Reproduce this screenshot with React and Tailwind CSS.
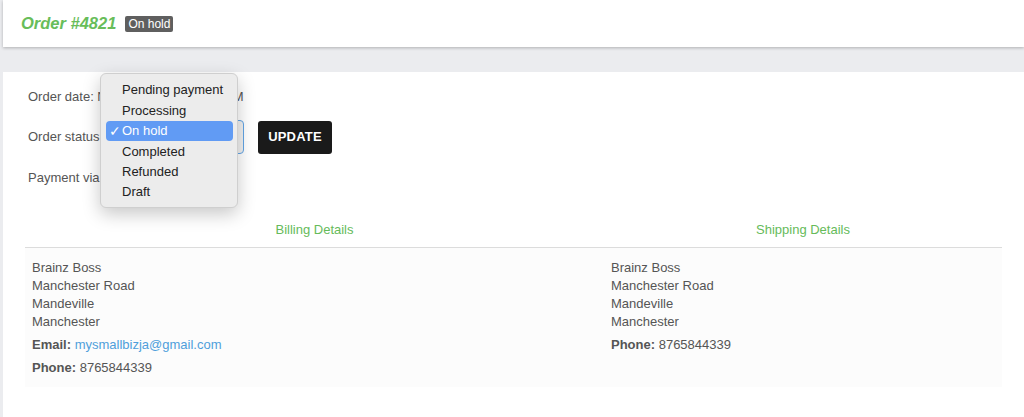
import { ChevronsUpDown } from 'lucide-react'

const OPTIONS = ['Pending payment', 'Processing', 'On hold', 'Completed', 'Refunded', 'Draft']

function StatusMenu() {
  return (
    <div className="absolute left-[100px] top-[73px] z-20 w-[138px] rounded-[6px] border border-[#cfcfcf] bg-[#ececec] px-[4px] pb-[5px] pt-[6px] shadow-[0_6px_18px_rgba(0,0,0,0.22)]">
      {OPTIONS.map((opt) => {
        const active = opt === 'On hold'
        return (
          <div
            key={opt}
            className={
              active
                ? 'relative ml-[1px] flex h-[20.4px] items-center rounded-[4px] bg-[#619bf4] pl-[16px] text-white'
                : 'relative ml-[1px] flex h-[20.4px] items-center pl-[16px] text-[#222]'
            }
          >
            {active ? <span className="absolute left-[3px] top-[0px] text-[14px] font-light">✓</span> : null}
            <span className="text-[13px]">{opt}</span>
          </div>
        )
      })}
    </div>
  )
}

function Address({ email }) {
  return (
    <div className="px-[7px] pb-[10px] pt-[11px] text-[13px] leading-[18px] text-[#555]">
      <div>Brainz Boss</div>
      <div>Manchester Road</div>
      <div>Mandeville</div>
      <div>Manchester</div>
      {email ? (
        <div className="mt-[5px]">
          <span className="font-bold">Email:</span>{' '}
          <span className="text-[#4f9fdb]">{email}</span>
        </div>
      ) : null}
      <div className="mt-[5px]">
        <span className="font-bold">Phone:</span> 8765844339
      </div>
    </div>
  )
}

export default function App() {
  return (
    <div
      className="relative h-[417px] overflow-hidden bg-[#ebecef] pl-[3px]"
      style={{ fontFamily: '"Liberation Sans", Arial, sans-serif' }}
    >
      <header className="flex h-[47px] items-center gap-[9px] bg-white pl-[18px] shadow-[0_1px_3px_rgba(0,0,0,0.25)]">
        <h1 className="text-[16.5px] font-bold italic text-[#68bd5a]">Order #4821</h1>
        <span className="rounded-[2px] bg-[#5f5f5f] px-[3px] py-[1px] text-[12px] leading-[14px] text-white">
          On hold
        </span>
      </header>

      <main className="mt-[25px] h-[400px] bg-white px-[22px] pt-[16px]">
        <div className="pl-[3px] text-[13px] leading-[18px] text-[#555]">
          <div>Order date: Nov 20, 2023 @ 2:15 PM</div>

          <div className="mt-[14px] flex items-center">
            <span>Order status:</span>
            <div className="ml-[4px] flex h-[34px] w-[137px] items-center justify-between rounded-[4px] border border-[#62a5e6] bg-[#f1f1f1] pl-[8px] pr-[5px] text-[#333]">
              <span>On hold</span>
              <ChevronsUpDown size={11} className="text-[#888]" />
            </div>
            <button className="ml-[14px] h-[33px] rounded-[3px] bg-[#1a1a1a] px-[10px] text-[13px] font-bold tracking-[0.2px] text-white">
              UPDATE
            </button>
          </div>

          <div className="mt-[15px]">Payment via Cash</div>
        </div>

        <div className="mt-[34px] grid grid-cols-[579px_1fr]">
          <div className="border-b border-[#dcdcdc] pb-[8px] text-center text-[13px] leading-[18px] text-[#66bb5a]">
            Billing Details
          </div>
          <div className="border-b border-[#dcdcdc] pb-[8px] text-center text-[13px] leading-[18px] text-[#66bb5a]">
            Shipping Details
          </div>
          <div className="bg-[#fcfcfc]">
            <Address email="mysmallbizja@gmail.com" />
          </div>
          <div className="bg-[#fcfcfc]">
            <Address />
          </div>
        </div>
      </main>

      <StatusMenu />
    </div>
  )
}
